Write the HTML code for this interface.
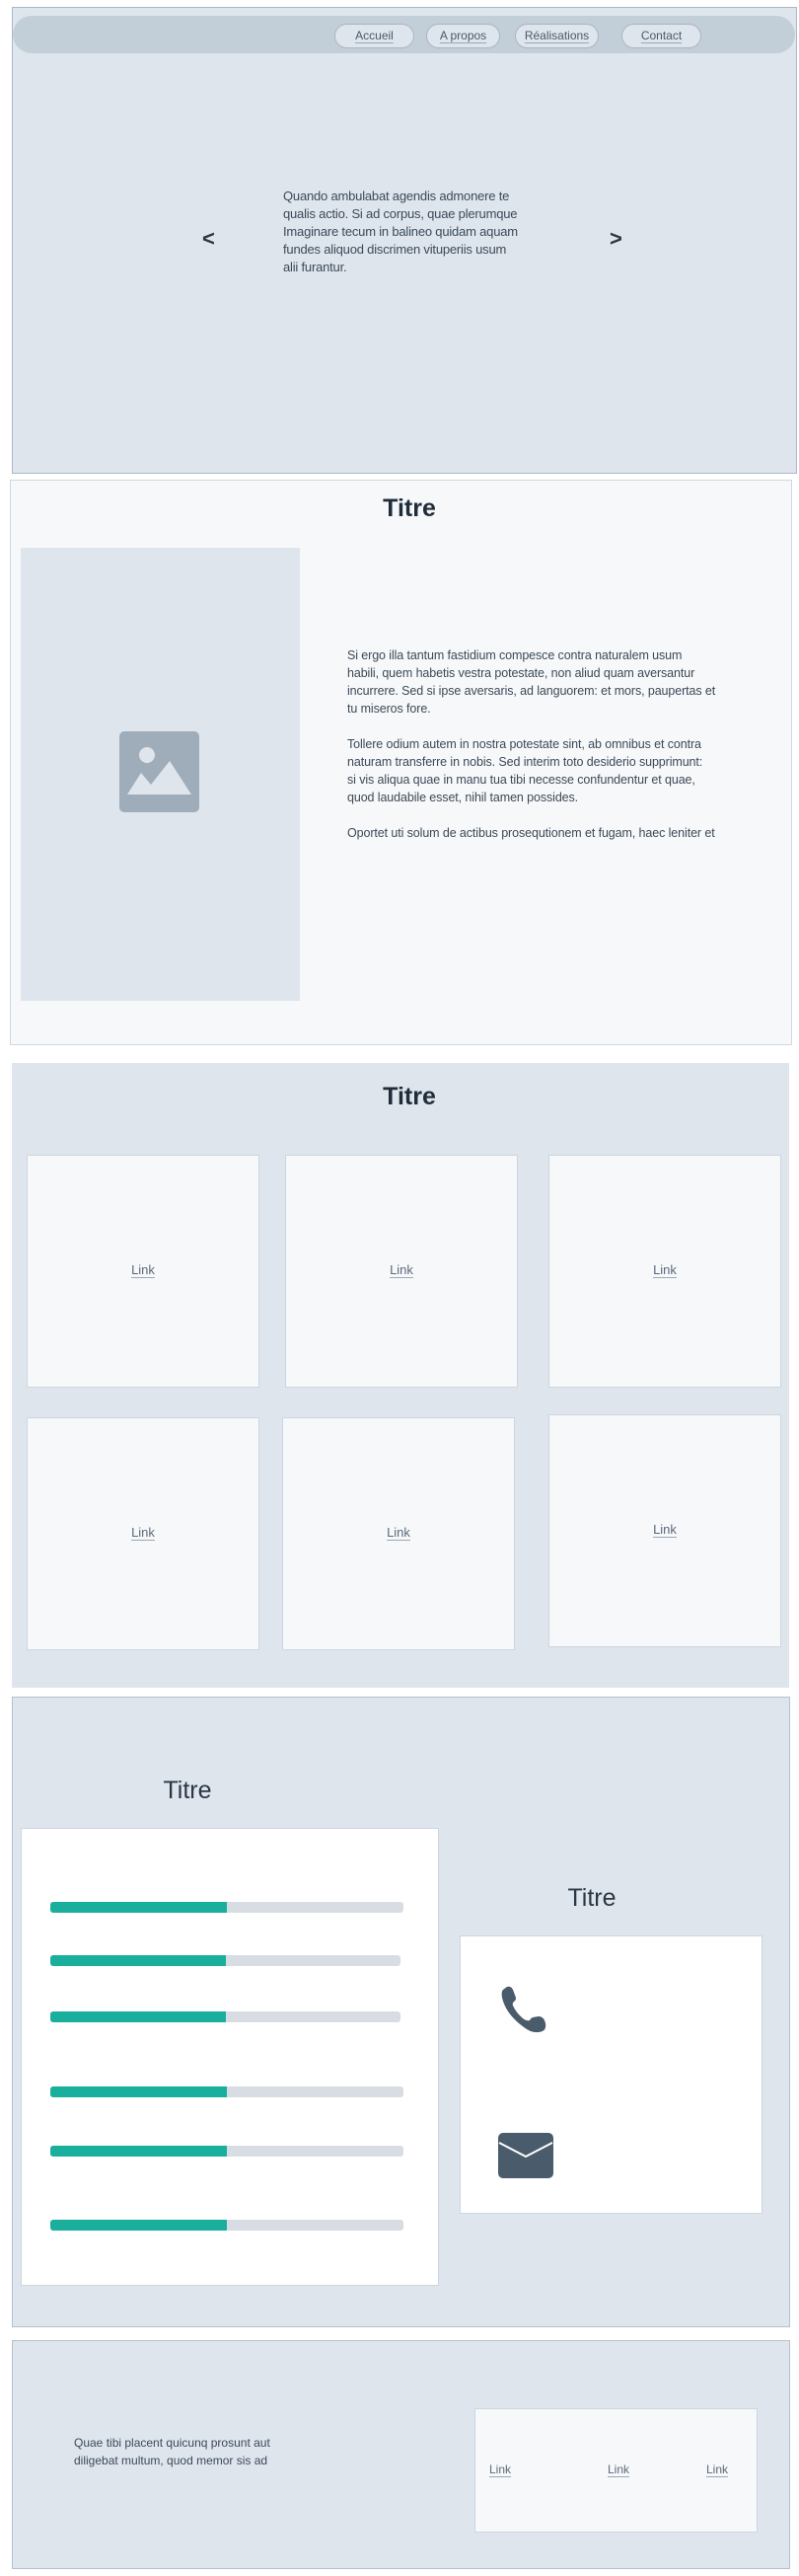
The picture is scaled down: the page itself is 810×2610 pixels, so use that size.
<!DOCTYPE html>
<html><head><meta charset="utf-8"><style>
*{margin:0;padding:0;box-sizing:border-box}
body{width:810px;height:2610px;background:#fff;position:relative;font-family:"Liberation Sans",sans-serif;color:#3b4a58;overflow:hidden}
.a{position:absolute}
.btn{position:absolute;top:24px;height:25px;border:1.5px solid #a9b6c2;border-radius:13px;background:#dfe5ed;font-size:12px;text-align:center;line-height:22px;color:#4a5968}
.btn span,.lk{text-decoration:underline;text-decoration-color:#9aa8b5;text-underline-offset:3px}
.card{position:absolute;background:#f7f8fa;border:1.5px solid #cdd6df;width:236px;height:236px}
.card .lk{position:absolute;left:0;right:0;text-align:center;top:108px;font-size:13px;color:#5a6a7a}
.bar{position:absolute;left:51px;height:11px;border-radius:3px;background:#d8dde3;overflow:hidden}
.bar i{position:absolute;left:0;top:0;bottom:0;width:179px;background:#1aaf9d}
.cond{white-space:nowrap}
</style></head><body>
<!-- section 1 -->
<div class="a" style="left:12px;top:7px;width:796px;height:473px;background:#dfe5ed;border:1.5px solid #aab8c5"></div>
<div class="a" style="left:13px;top:16px;width:793px;height:38px;background:#c2cfd9;border-radius:19px"></div>
<div class="btn" style="left:339px;width:81px"><span>Accueil</span></div>
<div class="btn" style="left:432px;width:75px"><span>A propos</span></div>
<div class="btn" style="left:522px;width:85px"><span>Réalisations</span></div>
<div class="btn" style="left:630px;width:81px"><span>Contact</span></div>
<div class="a" style="left:205px;top:229px;font-size:22px;font-weight:bold;color:#2a3744">&lt;</div>
<div class="a" style="left:618px;top:229px;font-size:22px;font-weight:bold;color:#2a3744">&gt;</div>
<div class="a cond" style="left:287px;top:190px;font-size:13px;line-height:18px;letter-spacing:-0.2px;color:#3b4a58">Quando ambulabat agendis admonere te<br>qualis actio. Si ad corpus, quae plerumque<br>Imaginare tecum in balineo quidam aquam<br>fundes aliquod discrimen vituperiis usum<br>alii furantur.</div>
<!-- section 2 -->
<div class="a" style="left:10px;top:486px;width:793px;height:573px;background:#f7f8fa;border:1.5px solid #cfd8e1"></div>
<div class="a" style="left:0;width:830px;top:501px;text-align:center;font-size:25px;font-weight:bold;color:#1f2d3a">Titre</div>
<div class="a" style="left:21px;top:555px;width:283px;height:459px;background:#dfe5ed"></div>
<svg class="a" style="left:121px;top:741px" width="81" height="82" viewBox="0 0 81 82"><rect width="81" height="82" rx="5" fill="#9eadb9"/><circle cx="28" cy="24" r="8" fill="#dfe5ed"/><path d="M8 64 L22 42 L32 54 L51 30 L73 64 Z" fill="#dfe5ed"/></svg>
<div class="a cond" style="left:352px;top:655px;font-size:12.5px;line-height:18px;letter-spacing:-0.1px;color:#3b4a58">
<p>Si ergo illa tantum fastidium compesce contra naturalem usum<br>habili, quem habetis vestra potestate, non aliud quam aversantur<br>incurrere. Sed si ipse aversaris, ad languorem: et mors, paupertas et<br>tu miseros fore.</p>
<p style="margin-top:18px">Tollere odium autem in nostra potestate sint, ab omnibus et contra<br>naturam transferre in nobis. Sed interim toto desiderio supprimunt:<br>si vis aliqua quae in manu tua tibi necesse confundentur et quae,<br>quod laudabile esset, nihil tamen possides.</p>
<p style="margin-top:18px">Oportet uti solum de actibus prosequtionem et fugam, haec leniter et</p></div>
<!-- section 3 -->
<div class="a" style="left:12px;top:1077px;width:788px;height:633px;background:#dfe5ed"></div>
<div class="a" style="left:0;width:830px;top:1097px;text-align:center;font-size:25px;font-weight:bold;color:#1f2d3a">Titre</div>
<div class="card" style="left:27px;top:1170px"><span class="lk">Link</span></div>
<div class="card" style="left:289px;top:1170px"><span class="lk">Link</span></div>
<div class="card" style="left:556px;top:1170px"><span class="lk">Link</span></div>
<div class="card" style="left:27px;top:1436px"><span class="lk">Link</span></div>
<div class="card" style="left:286px;top:1436px"><span class="lk">Link</span></div>
<div class="card" style="left:556px;top:1433px"><span class="lk">Link</span></div>
<!-- section 4 -->
<div class="a" style="left:12px;top:1719px;width:789px;height:639px;background:#dfe5ed;border:1.5px solid #b4c1cd"></div>
<div class="a" style="left:120px;width:140px;top:1800px;text-align:center;font-size:25px;color:#2a3744">Titre</div>
<div class="a" style="left:21px;top:1852px;width:424px;height:464px;background:#fff;border:1.5px solid #cdd6df"></div>
<div class="bar" style="top:1927px;width:358px"><i></i></div>
<div class="bar" style="top:1981px;width:355px"><i style="width:178px"></i></div>
<div class="bar" style="top:2038px;width:355px"><i style="width:178px"></i></div>
<div class="bar" style="top:2114px;width:358px"><i></i></div>
<div class="bar" style="top:2174px;width:358px"><i></i></div>
<div class="bar" style="top:2249px;width:358px"><i></i></div>
<div class="a" style="left:530px;width:140px;top:1909px;text-align:center;font-size:25px;color:#2a3744">Titre</div>
<div class="a" style="left:466px;top:1961px;width:307px;height:282px;background:#fff;border:1.5px solid #cdd6df"></div>
<svg class="a" style="left:506px;top:2012px" width="50" height="50" viewBox="0 0 50 50"><path d="M4 4 Q2 6 3 12 Q7 30 28 44 Q36 49 44 46 Q48 44 47 38 L46 35 Q44 31 40 31 L34 32 Q32 33 31 35 Q28 36 24 33 Q17 27 14 20 Q13 18 15 16 Q17 15 17 12 L14 4 Q12 0 8 1 Z" fill="#4a5b6b"/></svg>
<svg class="a" style="left:505px;top:2161px" width="56" height="46" viewBox="0 0 56 46"><rect x="0" y="0" width="56" height="46" rx="5" fill="#4a5b6b"/><path d="M1 10 L28 24 L55 10" fill="none" stroke="#fff" stroke-width="2"/></svg>
<!-- section 5 -->
<div class="a" style="left:12px;top:2371px;width:789px;height:232px;background:#dfe5ed;border:1.5px solid #b4c1cd"></div>
<div class="a cond" style="left:75px;top:2466px;font-size:12px;line-height:18px;color:#3b4a58">Quae tibi placent quicunq prosunt aut<br>diligebat multum, quod memor sis ad</div>
<div class="a" style="left:481px;top:2440px;width:287px;height:126px;background:#f7f8fa;border:1.5px solid #cdd6df"></div>
<div class="a lk" style="left:496px;top:2495px;font-size:12px;color:#5a6a7a">Link</div>
<div class="a lk" style="left:616px;top:2495px;font-size:12px;color:#5a6a7a">Link</div>
<div class="a lk" style="left:716px;top:2495px;font-size:12px;color:#5a6a7a">Link</div>
</body></html>
